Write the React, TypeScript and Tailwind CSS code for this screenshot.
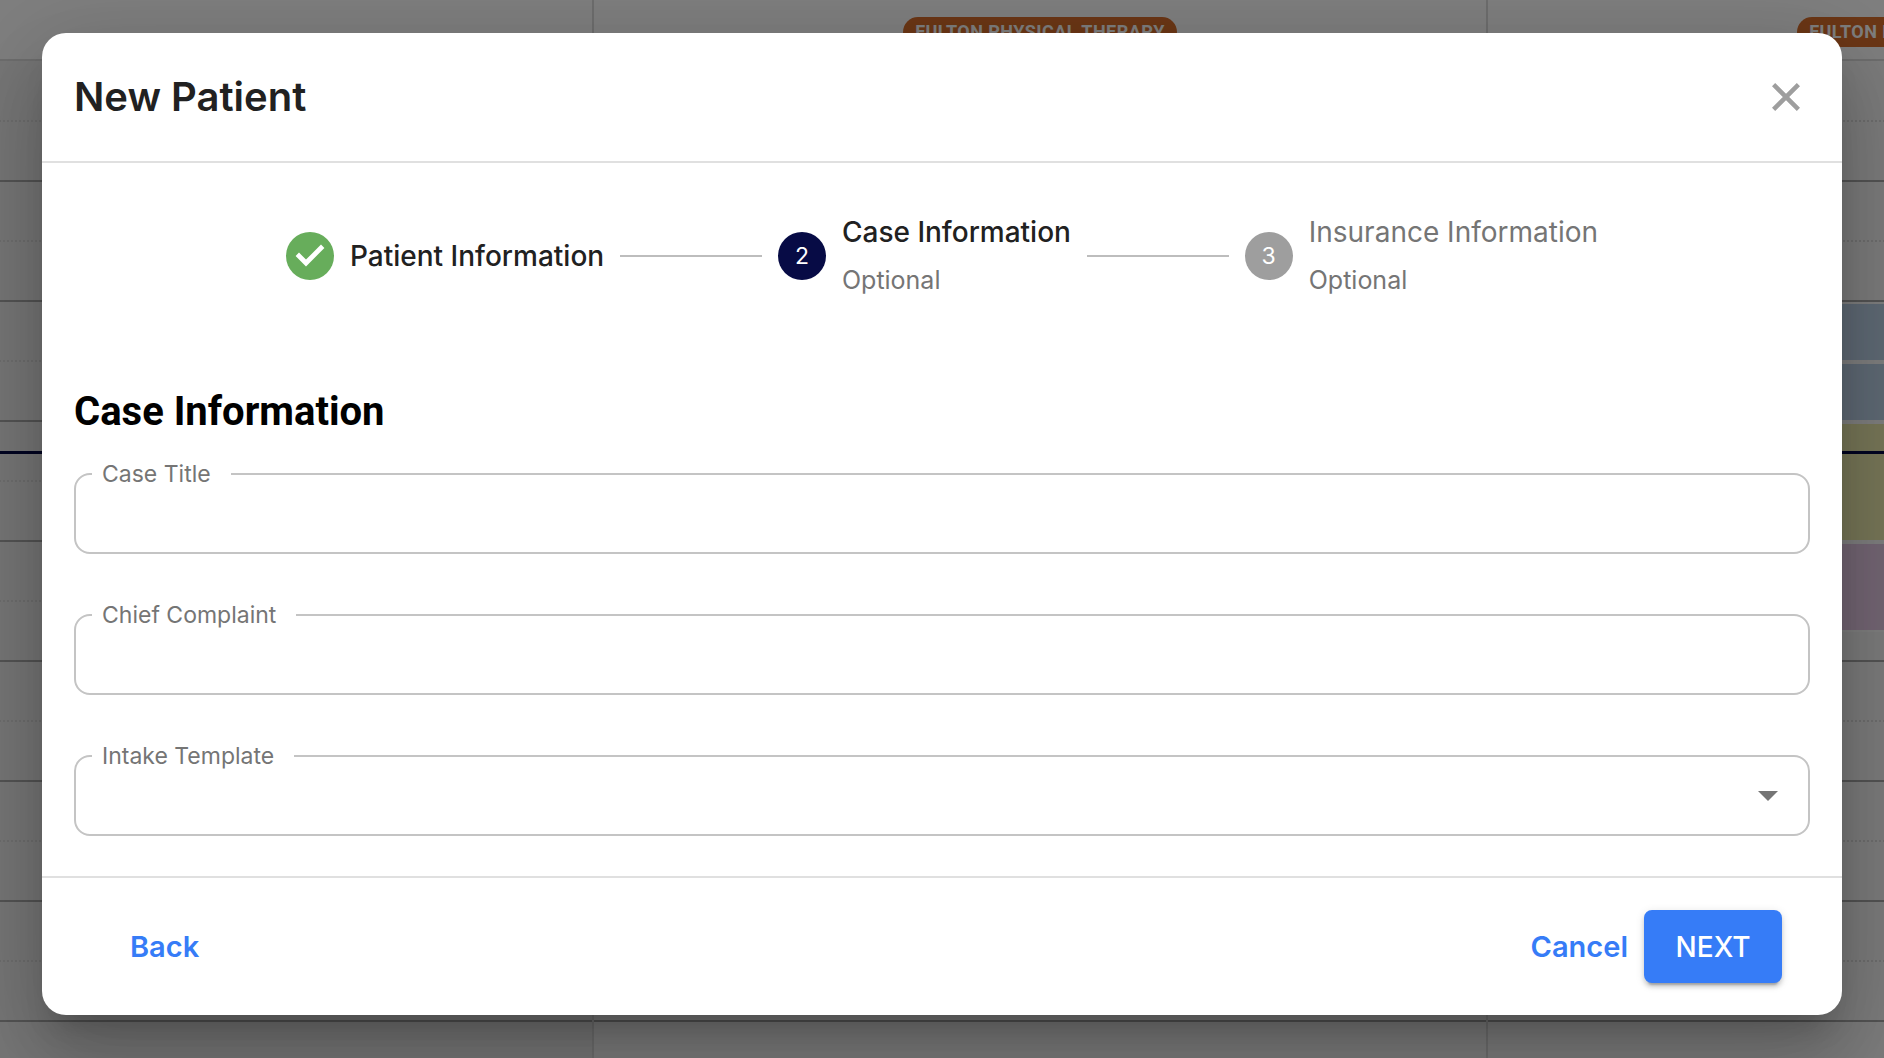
import { useId } from "react";
import type { ReactNode } from "react";

const events = [
  { id: 1, color: "bg-[#bed5ea]", size: "h-[60px]" },
  { id: 2, color: "bg-[#bed5ea]", size: "h-[60px]" },
  { id: 3, color: "bg-[#f1efb0]", size: "h-[120px]" },
  { id: 4, color: "bg-[#e8cde8]", size: "h-[90px]" },
];

function CalendarColumn({ location, shade = "bg-[#f8f8f8]", children }: { location?: string; shade?: string; children?: ReactNode }) {
  return (
    <section className="relative flex w-[894px] shrink-0 flex-col border-r-2 border-[#dddddd]">
      <header className="flex h-[61px] shrink-0 flex-col items-center border-b-2 border-[#dddddd] bg-white pt-[17px]">
        {location && <span className="h-[30px] rounded-full bg-[#d86f2d] px-3 text-lg leading-[30px] font-bold tracking-wide text-white">{location}</span>}
      </header>
      <div className={`relative flex-1 pt-px ${shade}`}>
        {Array.from({ length: 17 }, (_, i) => (
          <div key={i} className={i % 2 ? "h-[60px] border-b-2 border-[#a8a8a8]" : "h-[60px] border-b-2 border-dotted border-[#dcdcdc]"} />
        ))}
        {children}
      </div>
    </section>
  );
}

function Calendar() {
  return (
    <div className="relative h-full overflow-hidden bg-white font-[Roboto,sans-serif]" aria-hidden="true">
      {/* scrolled partway into the first day */}
      <div className="-ml-[300px] flex h-full">
        <CalendarColumn shade="bg-[#efefef]" />
        <CalendarColumn location="FULTON PHYSICAL THERAPY" />
        <CalendarColumn location="FULTON PHYSICAL THERAPY">
          <div className="absolute inset-x-0 top-[241px]">
            {events.map((event) => (
              <div key={event.id} className={`border-y-2 border-white ${event.size} ${event.color}`} />
            ))}
          </div>
        </CalendarColumn>
      </div>
      <div className="absolute inset-x-0 top-[451px] h-[3px] bg-[#050a44]" />
    </div>
  );
}

function StepLabel({ title, optional, muted }: { title: string; optional?: boolean; muted?: boolean }) {
  return (
    <span className="flex flex-col">
      <span className={`text-[28px] leading-10 ${muted ? "text-[#757575]" : "font-medium text-[#212121]"}`}>{title}</span>
      {optional && <span className="pt-2 text-[25px] leading-10 text-[#757575]">Optional</span>}
    </span>
  );
}

function StepIcon({ color, children }: { color: string; children: ReactNode }) {
  return <span className={`flex size-12 shrink-0 items-center justify-center rounded-full text-[23px] text-white ${color}`}>{children}</span>;
}

function Stepper() {
  return (
    <ol className="mx-auto flex w-full max-w-[1328px] items-center gap-4 px-2">
      <li className="flex items-center gap-4">
        <StepIcon color="bg-[#67ad5b]">
          <svg viewBox="0 0 24 24" className="size-12" fill="currentColor" aria-label="Completed">
            <path d="M10 17.2l-5.2-5.2 1.7-1.7 3.5 3.5 7.5-7.5L19.2 8z" />
          </svg>
        </StepIcon>
        <StepLabel title="Patient Information" />
      </li>
      <li className="h-[2px] flex-1 bg-[#bdbdbd]" aria-hidden="true" />
      <li className="flex items-center gap-4" aria-current="step">
        <StepIcon color="bg-[#070b45]">2</StepIcon>
        <StepLabel title="Case Information" optional />
      </li>
      <li className="h-[2px] flex-1 bg-[#bdbdbd]" aria-hidden="true" />
      <li className="flex items-center gap-4">
        <StepIcon color="bg-[#9e9e9e]">3</StepIcon>
        <StepLabel title="Insurance Information" optional muted />
      </li>
    </ol>
  );
}

function Field({ label, children }: { label: string; children: (id: string) => ReactNode }) {
  const id = useId();
  return (
    <fieldset className="h-[92px] min-w-0 rounded-2xl border-2 border-[#c4c4c4] px-4">
      <legend className="h-6 pr-5 pl-[10px] text-[23px] leading-6 text-[#757575]">
        <label htmlFor={id}>{label}</label>
      </legend>
      {children(id)}
    </fieldset>
  );
}

export default function App() {
  return (
    <main className="relative h-screen overflow-hidden font-[Inter,sans-serif]">
      <Calendar />
      <div className="absolute inset-0 bg-black/50 px-[42px] pt-[33px] pb-[43px]">
        <div role="dialog" aria-modal="true" aria-labelledby="dialog-title" className="flex h-full flex-col overflow-hidden rounded-3xl bg-white shadow-[0_22px_30px_-14px_rgba(0,0,0,0.2),0_48px_76px_6px_rgba(0,0,0,0.14),0_18px_92px_16px_rgba(0,0,0,0.12)]">
          <header className="flex h-[130px] shrink-0 items-center justify-between border-b-2 border-[#e0e0e0] px-8">
            <h1 id="dialog-title" className="text-[40px] leading-[48px] font-semibold text-[#212121]">New Patient</h1>
            <button type="button" aria-label="Close" className="flex size-12 items-center justify-center text-[#9e9e9e]">
              <svg viewBox="0 0 28 28" className="size-7" fill="none" stroke="currentColor" strokeWidth="4.5">
                <path d="M1.6 1.6l24.8 24.8M26.4 1.6L1.6 26.4" />
              </svg>
            </button>
          </header>

          <form className="flex flex-1 flex-col px-8 pt-[49px]">
            <Stepper />
            <h2 className="mt-[86px] font-[Roboto,sans-serif] text-[40px] leading-[52px] font-bold text-black">Case Information</h2>
            <div className="mt-6 flex flex-col gap-[49px]">
              <Field label="Case Title">{(id) => <input id={id} type="text" className="h-14 w-full text-2xl outline-none" />}</Field>
              <Field label="Chief Complaint">{(id) => <input id={id} type="text" className="h-14 w-full text-2xl outline-none" />}</Field>
              <Field label="Intake Template">
                {(id) => (
                  <div className="flex items-center pr-3.5">
                    <select id={id} className="h-14 min-w-0 flex-1 appearance-none text-2xl outline-none" />
                    <svg viewBox="0 0 20 10" className="h-[10px] w-5" fill="#757575" aria-hidden="true">
                      <path d="M0 0h20L10 10z" />
                    </svg>
                  </div>
                )}
              </Field>
            </div>
          </form>

          <footer className="flex h-[139px] shrink-0 items-center justify-between border-t-2 border-[#e0e0e0] pr-[60px] pl-[72px] text-[29px]">
            <button type="button" className="px-4 py-4 leading-10 font-semibold text-[#367cf7]">Back</button>
            <div className="flex items-center">
              <button type="button" className="px-4 py-4 leading-10 font-semibold text-[#367cf7]">Cancel</button>
              <button type="submit" className="h-[73px] w-[138px] rounded-lg bg-[#367cf7] text-[28px] font-medium text-white shadow-[0_6px_2px_-4px_rgba(0,0,0,0.2),0_4px_4px_0_rgba(0,0,0,0.14),0_2px_10px_0_rgba(0,0,0,0.12)]">NEXT</button>
            </div>
          </footer>
        </div>
      </div>
    </main>
  );
}
